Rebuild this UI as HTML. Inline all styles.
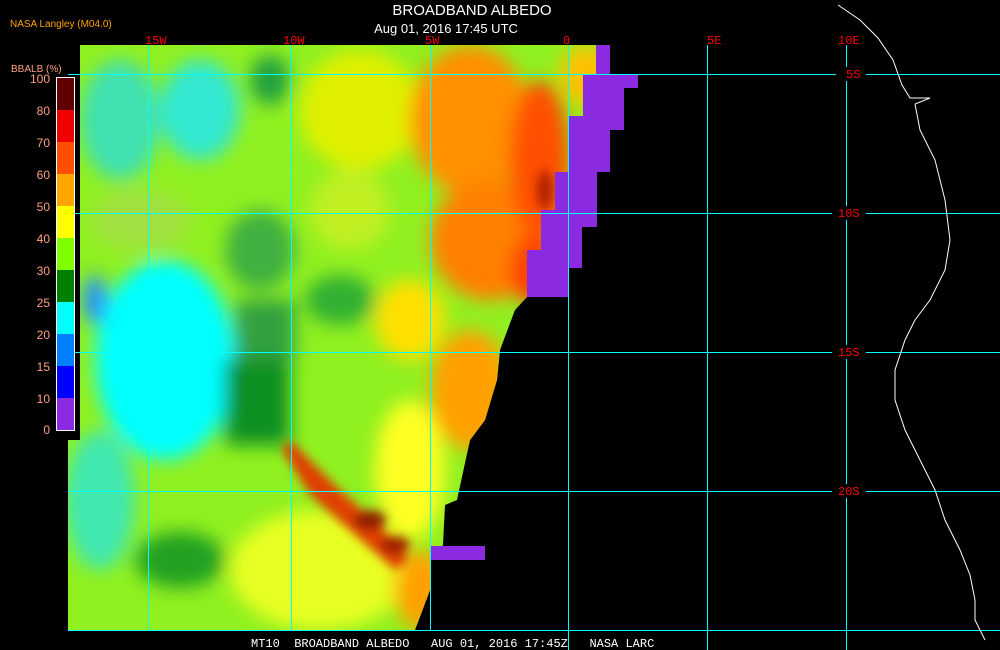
<!DOCTYPE html>
<html><head><meta charset="utf-8"><style>
html,body{margin:0;padding:0;background:#000;width:1000px;height:650px;overflow:hidden}
svg{display:block}
</style></head><body>
<svg width="1000" height="650" xmlns="http://www.w3.org/2000/svg" font-family="Liberation Sans, sans-serif">
<defs>
<clipPath id="c"><path d="M80,45 L610,45 L610,74 L638,74 L638,88 L624,88 L624,130 L610,130 L610,172 L597,172 L597,227 L582,227 L582,268 L568,268 L568,297 L527,297 L515,310 L500,350 L497,380 L485,420 L470,440 L457,500 L445,505 L443,545 L430,560 L430,590 L415,630 L68,630 L68,440 L80,440 Z"/></clipPath>
<filter id="b" x="-20%" y="-20%" width="140%" height="140%"><feGaussianBlur stdDeviation="9"/></filter>
<filter id="b2"><feGaussianBlur stdDeviation="5"/></filter>
</defs>
<g clip-path="url(#c)">
<rect x="60" y="40" width="600" height="600" fill="#90f020"/>
<g filter="url(#b)">
<ellipse cx="120" cy="120" rx="40" ry="60" fill="#40e0b0"/>
<ellipse cx="200" cy="110" rx="40" ry="50" fill="#30e8d0"/>
<ellipse cx="140" cy="220" rx="50" ry="30" fill="#a0e040"/>
<ellipse cx="165" cy="360" rx="70" ry="100" fill="#00ffff"/>
<ellipse cx="100" cy="500" rx="35" ry="70" fill="#40e8b0"/>
<ellipse cx="270" cy="80" rx="20" ry="25" fill="#20a040"/>
<ellipse cx="260" cy="250" rx="35" ry="40" fill="#40b040"/>
<rect x="225" y="360" width="65" height="85" fill="#109020"/>
<rect x="235" y="300" width="60" height="60" fill="#30a040"/>
<ellipse cx="180" cy="560" rx="45" ry="28" fill="#20a020"/>
<ellipse cx="340" cy="300" rx="35" ry="25" fill="#30b030"/>
<ellipse cx="360" cy="110" rx="60" ry="60" fill="#e0f000"/>
<ellipse cx="350" cy="210" rx="40" ry="40" fill="#c0f020"/>
<ellipse cx="470" cy="120" rx="60" ry="75" fill="#ff9000"/>
<ellipse cx="490" cy="240" rx="60" ry="60" fill="#ff8000"/>
<ellipse cx="540" cy="160" rx="30" ry="80" fill="#ff5000"/>
<ellipse cx="535" cy="270" rx="25" ry="35" fill="#ff4000"/>
<ellipse cx="585" cy="75" rx="25" ry="30" fill="#ffc000"/>
<ellipse cx="470" cy="390" rx="40" ry="60" fill="#ffa000"/>
<ellipse cx="410" cy="320" rx="35" ry="40" fill="#ffe000"/>
<ellipse cx="410" cy="470" rx="35" ry="70" fill="#ffff20"/>
<ellipse cx="320" cy="570" rx="90" ry="60" fill="#e8ff20"/>
<ellipse cx="420" cy="590" rx="25" ry="40" fill="#ffa000"/>
<ellipse cx="95" cy="300" rx="12" ry="25" fill="#2090ff"/>
</g>
<g filter="url(#b2)">
<path d="M290,440 L340,490 L380,525 L410,560 L395,570 L355,535 L310,495 L282,450 Z" fill="#e04000"/>
<ellipse cx="370" cy="520" rx="16" ry="10" fill="#902000"/>
<ellipse cx="395" cy="545" rx="15" ry="9" fill="#a02000"/>
<ellipse cx="545" cy="190" rx="8" ry="20" fill="#b02000"/>
</g>
</g>
<path d="M596,45 L610,45 L610,74 L638,74 L638,88 L624,88 L624,130 L610,130 L610,172 L597,172 L597,227 L582,227 L582,268 L568,268 L568,297 L527,297 L527,250 L541,250 L541,210 L555,210 L555,172 L569,172 L569,116 L583,116 L583,74 L596,74 Z" fill="#8a2be2"/>
<rect x="430" y="546" width="55" height="14" fill="#8a2be2"/>
<g stroke="#00ffff" stroke-width="1">
<line x1="148.5" y1="45" x2="148.5" y2="630"/>
<line x1="291.5" y1="45" x2="291.5" y2="630"/>
<line x1="430.5" y1="45" x2="430.5" y2="630"/>
<line x1="568.5" y1="45" x2="568.5" y2="650"/>
<line x1="707.5" y1="45" x2="707.5" y2="650"/>
<line x1="846.5" y1="45" x2="846.5" y2="650"/>
<line x1="68" y1="74.5" x2="1000" y2="74.5"/>
<line x1="68" y1="213.5" x2="1000" y2="213.5"/>
<line x1="68" y1="352.5" x2="1000" y2="352.5"/>
<line x1="68" y1="491.5" x2="1000" y2="491.5"/>
<line x1="68" y1="630.5" x2="1000" y2="630.5"/>
</g>
<path d="M838,5 L860,20 L878,38 L893,60 L902,85 L910,98 L930,98 L915,104 L920,130 L935,160 L945,200 L950,240 L945,270 L930,300 L915,320 L905,340 L895,370 L895,400 L905,430 L920,460 L935,490 L945,520 L960,550 L970,575 L975,600 L975,620 L985,640" stroke="#fff" stroke-width="1" fill="none"/>
<g fill="#000">
<rect x="836" y="67" width="30" height="14"/><rect x="832" y="206" width="34" height="14"/>
<rect x="832" y="345" width="34" height="14"/><rect x="832" y="484" width="34" height="14"/>
</g>
<g fill="#ff0000" font-family="Liberation Mono, monospace" font-size="12">
<text x="145" y="44">15W</text><text x="283" y="44">10W</text><text x="425" y="44">5W</text>
<text x="563" y="44">0</text><text x="707" y="44">5E</text><text x="838" y="44">10E</text>
<text x="846" y="78">5S</text><text x="838" y="217">10S</text><text x="838" y="356">15S</text><text x="838" y="495">20S</text>
</g>
<text x="472" y="15" fill="#fff" font-size="15" text-anchor="middle">BROADBAND ALBEDO</text>
<text x="446" y="33" fill="#fff" font-size="13" text-anchor="middle">Aug 01, 2016 17:45 UTC</text>
<text x="10" y="27" fill="#ffa500" font-size="10">NASA Langley (M04.0)</text>
<text x="11" y="72" fill="#ffa080" font-size="10">BBALB (%)</text>
<g>
<rect x="57" y="78" width="17" height="32" fill="#600000"/>
<rect x="57" y="110" width="17" height="32" fill="#f00000"/>
<rect x="57" y="142" width="17" height="32" fill="#ff5000"/>
<rect x="57" y="174" width="17" height="32" fill="#ffa500"/>
<rect x="57" y="206" width="17" height="32" fill="#ffff00"/>
<rect x="57" y="238" width="17" height="32" fill="#80ff00"/>
<rect x="57" y="270" width="17" height="32" fill="#008000"/>
<rect x="57" y="302" width="17" height="32" fill="#00ffff"/>
<rect x="57" y="334" width="17" height="32" fill="#0080ff"/>
<rect x="57" y="366" width="17" height="32" fill="#0000ff"/>
<rect x="57" y="398" width="17" height="32" fill="#8a2be2"/>
<rect x="56.5" y="77.5" width="18" height="353" fill="none" stroke="#fff"/>
</g>
<g fill="#ffa080" font-size="12" text-anchor="end">
<text x="50" y="83">100</text><text x="50" y="115">80</text><text x="50" y="147">70</text><text x="50" y="179">60</text>
<text x="50" y="211">50</text><text x="50" y="243">40</text><text x="50" y="275">30</text><text x="50" y="307">25</text>
<text x="50" y="339">20</text><text x="50" y="371">15</text><text x="50" y="403">10</text><text x="50" y="434">0</text>
</g>
<text x="251" y="647" fill="#fff" font-family="Liberation Mono, monospace" font-size="12" xml:space="preserve">MT10  BROADBAND ALBEDO   AUG 01, 2016 17:45Z   NASA LARC</text>
</svg>
</body></html>
